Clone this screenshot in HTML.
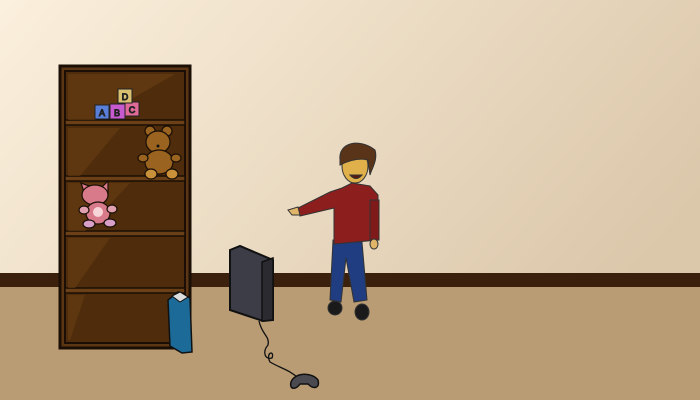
<!DOCTYPE html>
<html><head><style>html,body{margin:0;padding:0;width:700px;height:400px;overflow:hidden}svg{display:block}</style></head><body>
<svg width="700" height="400" viewBox="0 0 700 400" xmlns="http://www.w3.org/2000/svg">
<defs>
<linearGradient id="wall" x1="0" y1="0" x2="1" y2="0.5">
<stop offset="0" stop-color="#fbf0dd"/><stop offset="1" stop-color="#dbc7aa"/></linearGradient>
</defs>
<rect width="700" height="400" fill="url(#wall)"/>
<rect y="273" width="700" height="14" fill="#3b200d"/>
<rect y="287" width="700" height="113" fill="#b99c74"/>
<!-- bookshelf -->
<rect x="60" y="66" width="130" height="282" fill="#5c3612" stroke="#1a0e05" stroke-width="3"/>
<rect x="65" y="71" width="120" height="272" fill="#4e2c0c" stroke="#1a0e05" stroke-width="2"/>
<g fill="#6b4016" stroke="#1a0e05" stroke-width="1.5">
<rect x="65" y="120" width="120" height="5"/>
<rect x="65" y="176" width="120" height="5"/>
<rect x="65" y="231" width="120" height="5"/>
<rect x="65" y="288" width="120" height="5"/>
</g>
<g fill="#6a3f15" opacity="0.6">
<polygon points="68,74 175,74 95,120 68,120"/>
<polygon points="68,128 120,128 80,176 68,176"/>
<polygon points="68,183 130,183 85,231 68,231"/>
<polygon points="68,238 110,238 75,288 68,288"/>
<polygon points="68,295 85,295 70,340 68,340"/>
</g>
<!-- blocks -->
<g stroke="#222" stroke-width="1" font-family="Liberation Sans, sans-serif" font-size="9" text-anchor="middle">
<rect x="95" y="105" width="14" height="14" fill="#5a7fd8"/><text x="102" y="116" fill="#123">A</text>
<rect x="110" y="104" width="15" height="15" fill="#c85ad0"/><text x="117" y="116" fill="#312">B</text>
<rect x="125" y="102" width="14" height="14" fill="#e06a98"/><text x="132" y="113" fill="#312">C</text>
<rect x="118" y="89" width="14" height="14" fill="#d8c070"/><text x="125" y="100" fill="#321">D</text>
</g>
<!-- bear -->
<g stroke="#1a0e05" stroke-width="1.2" fill="#9a6420">
<circle cx="150" cy="131" r="5"/><circle cx="167" cy="131" r="5"/>
<ellipse cx="158" cy="142" rx="12" ry="11"/>
<ellipse cx="159" cy="162" rx="14" ry="12"/>
<ellipse cx="143" cy="158" rx="5" ry="4"/><ellipse cx="176" cy="158" rx="5" ry="4"/>
<ellipse cx="151" cy="174" rx="6" ry="5" fill="#c9923a"/><ellipse cx="172" cy="174" rx="6" ry="5" fill="#c9923a"/>
</g>
<circle cx="158" cy="146" r="1.5" fill="#111"/>
<!-- cat -->
<g stroke="#1a0e05" stroke-width="1.2" fill="#d97a8a">
<polygon points="81,183 85,195 95,188"/><polygon points="108,181 99,190 108,195"/>
<ellipse cx="95" cy="195" rx="13" ry="10"/>
<ellipse cx="98" cy="213" rx="12" ry="11"/>
<ellipse cx="84" cy="210" rx="5" ry="4" fill="#e0a0b0"/><ellipse cx="112" cy="209" rx="5" ry="4" fill="#e0a0b0"/>
<ellipse cx="89" cy="224" rx="6" ry="4" fill="#d8a0c8"/><ellipse cx="110" cy="223" rx="6" ry="4" fill="#d8a0c8"/>
</g>
<ellipse cx="98" cy="212" rx="5" ry="5" fill="#f7d4d8"/>
<!-- book -->
<polygon points="168,300 178,292 190,298 192,352 182,353 170,346" fill="#1c6a98" stroke="#111" stroke-width="1.5"/>
<polygon points="172,296 180,292 188,297 180,302" fill="#ddd" stroke="#111" stroke-width="1"/>
<!-- console -->
<polygon points="230,250 240,246 273,260 273,320 263,321 230,310" fill="#3d3d48" stroke="#111" stroke-width="2"/>
<polygon points="262,262 273,258 273,320 262,321" fill="#2a2a30" stroke="#111" stroke-width="1.5"/>
<path d="M259,321 C262,335 270,336 268,345 C262,352 265,360 272,358 C275,350 265,352 270,362 C280,368 290,370 298,378" fill="none" stroke="#111" stroke-width="1.3"/>
<path d="M291,382 C295,372 312,372 318,380 C320,388 314,390 308,384 L300,384 C296,390 289,390 291,382Z" fill="#4a4a50" stroke="#111" stroke-width="1.5"/>
<!-- boy -->
<g stroke="#333" stroke-width="1">
<path d="M333,240 L330,300 L341,302 L346,258 L354,302 L367,300 L362,242Z" fill="#1f3d80"/>
<ellipse cx="335" cy="308" rx="7" ry="7" fill="#1a1a1a"/><ellipse cx="362" cy="312" rx="7" ry="8" fill="#1a1a1a"/>
<path d="M342,188 L352,183 L370,186 L378,195 L378,240 L334,244 L334,208 L300,216 L298,208 L330,192 Z" fill="#8c1e1e"/>
<rect x="370" y="200" width="9" height="40" fill="#7f1a1a"/>
<path d="M298,207 L288,210 L292,215 L300,215Z" fill="#e0b56a"/>
<ellipse cx="374" cy="244" rx="4" ry="5" fill="#e0b56a"/>
<ellipse cx="355" cy="166" rx="13" ry="17" fill="#e0b04a"/>
<path d="M340,160 C338,142 360,138 375,150 C378,160 372,168 370,175 L368,160 C360,158 350,160 340,165Z" fill="#5a3418"/>
<path d="M350,175 Q356,182 362,175Z" fill="#5a1a10"/>
</g>
</svg>
</body></html>
